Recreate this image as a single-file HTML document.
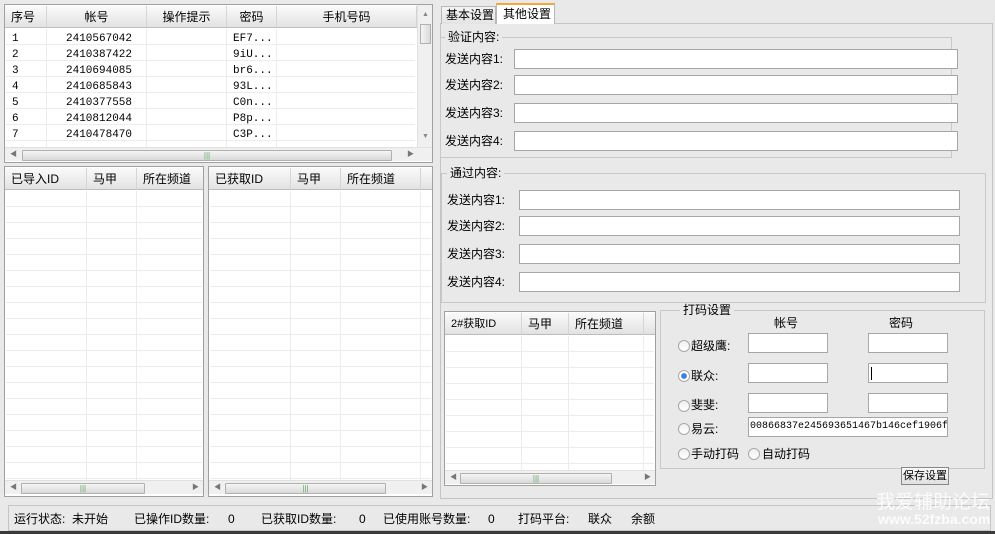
<!DOCTYPE html>
<html><head><meta charset="utf-8"><style>
*{box-sizing:border-box;margin:0;padding:0}
body{width:995px;height:534px;background:#e9e9e9;font-family:"Liberation Sans","WenQuanYi Zen Hei","Noto Sans CJK SC",sans-serif;font-size:12px;color:#000;position:relative;overflow:hidden;white-space:nowrap}
.a{position:absolute}
.lv{position:absolute;background:#fff;border:1px solid #a0a0a0;overflow:hidden}
.hd{position:absolute;top:1px;height:22px;background:linear-gradient(#fafafa,#ececec 60%,#e2e2e2);border-bottom:1px solid #bdbdbd;border-right:1px solid #d5d5d5;line-height:22px;padding-left:6px;white-space:nowrap}
.vl{position:absolute;width:1px;background:#ececec}
.rows{position:absolute;left:1px;right:1px;background:repeating-linear-gradient(to bottom,transparent 0,transparent 15px,#ececec 15px,#ececec 16px)}
.hs{position:absolute;height:14px;background:#f0f0f0;border-top:1px solid #e0e0e0}
.th{position:absolute;top:2px;height:11px;background:linear-gradient(#f4f4f4,#d9d9d9);border:1px solid #b0b0b0;border-radius:1px;text-align:center;font-size:8px;line-height:9px;color:#6a6}
.inp{position:absolute;background:#fff;border:1px solid #a6a6a6;height:20px}
.grp{position:absolute;border:1px solid #c8c8c8}
.gl{position:absolute;background:#e9e9e9;padding:0 3px;line-height:14px}
.lab{position:absolute;line-height:14px;white-space:nowrap}
.rd{position:absolute;width:12px;height:12px;border-radius:50%;border:1px solid #a8a8a8;background:linear-gradient(#f0f0f0,#fff)}
.mono{font-family:"Liberation Mono","WenQuanYi Zen Hei",monospace;font-size:11px}
</style></head><body>

<div class="lv" style="left:4px;top:4px;width:429px;height:159px">
 <div class="hd" style="left:0;width:42px">序号</div>
 <div class="hd" style="left:42px;width:100px;text-align:center;padding:0">帐号</div>
 <div class="hd" style="left:142px;width:80px;text-align:center;padding:0">操作提示</div>
 <div class="hd" style="left:222px;width:50px;text-align:center;padding:0">密码</div>
 <div class="hd" style="left:272px;width:140px;text-align:center;padding:0">手机号码</div>
 <div class="rows" style="top:24px;height:118px;right:17px"></div>
 <div class="vl" style="left:41px;top:24px;height:118px"></div>
 <div class="vl" style="left:141px;top:24px;height:118px"></div>
 <div class="vl" style="left:221px;top:24px;height:118px"></div>
 <div class="vl" style="left:271px;top:24px;height:118px"></div>
 <div class="a mono" style="left:7px;top:26px;line-height:16px">1<br>2<br>3<br>4<br>5<br>6<br>7</div>
 <div class="a mono" style="left:61px;top:26px;line-height:16px">2410567042<br>2410387422<br>2410694085<br>2410685843<br>2410377558<br>2410812044<br>2410478470</div>
 <div class="a mono" style="left:228px;top:26px;line-height:16px">EF7...<br>9iU...<br>br6...<br>93L...<br>C0n...<br>P8p...<br>C3P...</div>
 <div class="a" style="left:412px;top:0;width:16px;height:142px;background:#f0f0f0;border-left:1px solid #e0e0e0"><div class="a" style="left:2px;top:19px;width:11px;height:20px;border:1px solid #b0b0b0;background:linear-gradient(90deg,#f4f4f4,#dadada)"></div><div class="a" style="left:4px;top:6px;font-size:7px;color:#888">▲</div><div class="a" style="left:4px;top:128px;font-size:7px;color:#888">▼</div></div>
 <div class="hs" style="left:0;top:142px;width:428px"><div class="th" style="left:17px;width:370px">|||</div><span class="a" style="left:5px;top:1px;font-size:7px;color:#777">◀</span><span class="a" style="left:402px;top:1px;font-size:7px;color:#777">▶</span></div>
</div>

<div class="lv" style="left:4px;top:166px;width:200px;height:331px">
 <div class="hd" style="left:0;width:82px">已导入ID</div>
 <div class="hd" style="left:82px;width:50px">马甲</div>
 <div class="hd" style="left:132px;width:67px">所在频道</div>
 <div class="rows" style="top:24px;height:290px"></div>
 <div class="vl" style="left:81px;top:24px;height:290px"></div>
 <div class="vl" style="left:131px;top:24px;height:290px"></div>
 <div class="hs" style="left:0;top:313px;width:198px"><div class="th" style="left:16px;width:124px">|||</div><span class="a" style="left:5px;top:1px;font-size:7px;color:#777">◀</span><span class="a" style="left:187px;top:1px;font-size:7px;color:#777">▶</span></div>
</div>
<div class="lv" style="left:208px;top:166px;width:225px;height:331px">
 <div class="hd" style="left:0;width:82px">已获取ID</div>
 <div class="hd" style="left:82px;width:50px">马甲</div>
 <div class="hd" style="left:132px;width:80px">所在频道</div>
 <div class="hd" style="left:212px;width:12px"></div>
 <div class="rows" style="top:24px;height:290px"></div>
 <div class="vl" style="left:81px;top:24px;height:290px"></div>
 <div class="vl" style="left:131px;top:24px;height:290px"></div>
 <div class="vl" style="left:211px;top:24px;height:290px"></div>
 <div class="hs" style="left:0;top:313px;width:223px"><div class="th" style="left:16px;width:161px">|||</div><span class="a" style="left:5px;top:1px;font-size:7px;color:#777">◀</span><span class="a" style="left:212px;top:1px;font-size:7px;color:#777">▶</span></div>
</div>

<div class="a" style="left:440px;top:23px;width:553px;height:476px;border:1px solid #c4c4c4"></div>
<div class="a" style="left:441px;top:6px;width:55px;height:18px;border:1px solid #b8b8b8;border-bottom:none;background:linear-gradient(#f4f4f4,#e4e4e4);line-height:17px;padding-left:4px;font-size:12px">基本设置</div>
<div class="a" style="left:496px;top:3px;width:59px;height:21px;border:1px solid #b8b8b8;border-top:2px solid #f3a73c;border-bottom:none;background:#fff;line-height:19px;padding-left:6px;font-size:12px">其他设置</div>

<div class="grp" style="left:440px;top:37px;width:512px;height:121px"></div>
<div class="gl" style="left:445px;top:30px">验证内容:</div>
<div class="lab" style="left:445px;top:52px">发送内容1:</div>
<div class="lab" style="left:445px;top:78px">发送内容2:</div>
<div class="lab" style="left:445px;top:106px">发送内容3:</div>
<div class="lab" style="left:445px;top:134px">发送内容4:</div>
<div class="inp" style="left:514px;top:49px;width:444px"></div>
<div class="inp" style="left:514px;top:75px;width:444px"></div>
<div class="inp" style="left:514px;top:103px;width:444px"></div>
<div class="inp" style="left:514px;top:131px;width:444px"></div>

<div class="grp" style="left:441px;top:173px;width:545px;height:130px"></div>
<div class="gl" style="left:447px;top:166px">通过内容:</div>
<div class="lab" style="left:447px;top:193px">发送内容1:</div>
<div class="lab" style="left:447px;top:219px">发送内容2:</div>
<div class="lab" style="left:447px;top:247px">发送内容3:</div>
<div class="lab" style="left:447px;top:275px">发送内容4:</div>
<div class="inp" style="left:519px;top:190px;width:441px"></div>
<div class="inp" style="left:519px;top:216px;width:441px"></div>
<div class="inp" style="left:519px;top:244px;width:441px"></div>
<div class="inp" style="left:519px;top:272px;width:441px"></div>

<div class="lv" style="left:444px;top:311px;width:212px;height:175px">
 <div class="hd" style="left:0;width:77px;font-size:11px">2#获取ID</div>
 <div class="hd" style="left:77px;width:47px">马甲</div>
 <div class="hd" style="left:124px;width:75px">所在频道</div>
 <div class="hd" style="left:199px;width:12px"></div>
 <div class="rows" style="top:24px;height:134px"></div>
 <div class="vl" style="left:76px;top:24px;height:134px"></div>
 <div class="vl" style="left:123px;top:24px;height:134px"></div>
 <div class="vl" style="left:198px;top:24px;height:134px"></div>
 <div class="hs" style="left:0;top:158px;width:210px"><div class="th" style="left:15px;width:152px">|||</div><span class="a" style="left:5px;top:1px;font-size:7px;color:#777">◀</span><span class="a" style="left:199px;top:1px;font-size:7px;color:#777">▶</span></div>
</div>

<div class="grp" style="left:660px;top:310px;width:325px;height:159px"></div>
<div class="a" style="left:901px;top:467px;width:48px;height:18px;border:1px solid #888;background:linear-gradient(#fafafa,#e0e0e0);text-align:center;line-height:16px;font-size:11px;overflow:hidden">保存设置</div>
<div class="gl" style="left:680px;top:303px">打码设置</div>
<div class="lab" style="left:774px;top:316px">帐号</div>
<div class="lab" style="left:889px;top:316px">密码</div>
<div class="rd" style="left:678px;top:340px"></div><div class="lab" style="left:691px;top:339px">超级鹰:</div>
<div class="rd" style="left:678px;top:370px;background:radial-gradient(circle,#3d7fe0 0,#3d7fe0 2.5px,#fff 3.2px)"></div><div class="lab" style="left:691px;top:369px">联众:</div>
<div class="rd" style="left:678px;top:400px"></div><div class="lab" style="left:691px;top:398px">斐斐:</div>
<div class="rd" style="left:678px;top:423px"></div><div class="lab" style="left:691px;top:422px">易云:</div>
<div class="rd" style="left:678px;top:448px"></div><div class="lab" style="left:691px;top:447px">手动打码</div>
<div class="rd" style="left:748px;top:448px"></div><div class="lab" style="left:762px;top:447px">自动打码</div>
<div class="inp" style="left:748px;top:333px;width:80px"></div>
<div class="inp" style="left:868px;top:333px;width:80px"></div>
<div class="inp" style="left:748px;top:363px;width:80px"></div>
<div class="inp" style="left:868px;top:363px;width:80px"><div class="a" style="left:2px;top:3px;width:1px;height:13px;background:#000"></div></div>
<div class="inp" style="left:748px;top:393px;width:80px"></div>
<div class="inp" style="left:868px;top:393px;width:80px"></div>
<div class="inp mono" style="left:748px;top:417px;width:200px;overflow:hidden;white-space:nowrap;font-size:10px;line-height:18px;padding-left:1px">00866837e245693651467b146cef1906f</div>

<div class="a" style="left:8px;top:505px;width:983px;height:26px;border:1px solid #c4c4c4;background:#e9e9e9"></div>
<div class="lab" style="left:14px;top:512px">运行状态:&nbsp; 未开始</div>
<div class="lab" style="left:134px;top:512px">已操作ID数量:</div>
<div class="lab" style="left:228px;top:512px">0</div>
<div class="lab" style="left:261px;top:512px">已获取ID数量:</div>
<div class="lab" style="left:359px;top:512px">0</div>
<div class="lab" style="left:383px;top:512px">已使用账号数量:</div>
<div class="lab" style="left:488px;top:512px">0</div>
<div class="lab" style="left:518px;top:512px">打码平台:</div>
<div class="lab" style="left:588px;top:512px">联众</div>
<div class="lab" style="left:631px;top:512px">余额</div>
<div class="a" style="left:0;top:531px;width:995px;height:3px;background:#3a3a3a"></div>

<div class="a" style="left:876px;top:487px;font-size:19px;color:rgba(255,255,255,.85);white-space:nowrap">我爱辅助论坛</div>
<div class="a" style="left:878px;top:511px;font-size:14px;font-weight:bold;color:rgba(255,255,255,.85);white-space:nowrap">www.52fzba.com</div>
</body></html>
